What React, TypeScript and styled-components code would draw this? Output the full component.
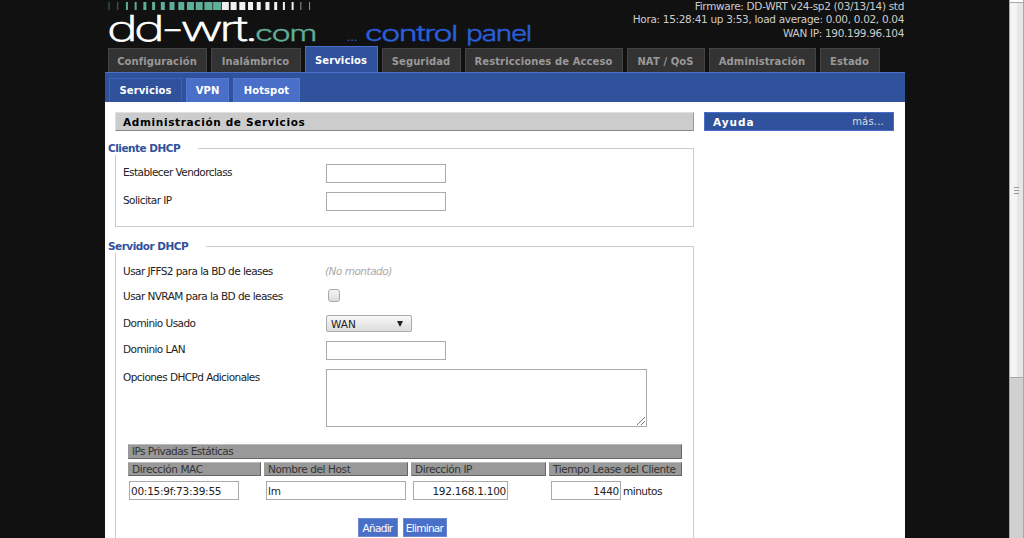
import React from "react";
import styled, { createGlobalStyle } from "styled-components";

const GlobalStyle = createGlobalStyle`
  html, body {
    margin: 0;
    padding: 0;
    height: 538px;
    overflow: hidden;
    background: #111111;
  }
  * {
    box-sizing: border-box;
  }
`;

const Screen = styled.div`
  display: flex;
  height: 538px;
  overflow: hidden;
`;

const Viewport = styled.div`
  flex: 1;
  display: flex;
  justify-content: center;
  padding-left: 1px;
`;

const Wrapper = styled.div`
  width: 800px;
  display: flex;
  flex-direction: column;
`;

const Header = styled.header`
  height: 72px;
  display: flex;
  flex-direction: column;
  justify-content: flex-end;
  position: relative;
`;

const LogoArt = styled.svg`
  position: absolute;
  left: 0;
  top: 0;
  pointer-events: none;
`;

const Status = styled.div`
  position: absolute;
  right: 1px;
  top: 0;
  text-align: right;
  font: 10.5px/13.4px "DejaVu Sans", sans-serif;
  letter-spacing: -0.32px;
  color: #cccccc;
`;

const Tabs = styled.nav`
  display: flex;
  align-items: flex-end;
  gap: 4px;
  padding-left: 3px;
`;

const Tab = styled.div<{ $active?: boolean; $width: number }>`
  width: ${({ $width }) => $width}px;
  height: ${({ $active }) => ($active ? 26 : 24)}px;
  display: flex;
  align-items: center;
  justify-content: center;
  padding: 1px 1px 0 0;
  font: bold 10px "DejaVu Sans", sans-serif;
  letter-spacing: 0.1px;
  color: ${({ $active }) => ($active ? "#ffffff" : "#999999")};
  background: ${({ $active }) => ($active ? "#30519c" : "#333333")};
  border: 1px solid ${({ $active }) => ($active ? "#4a6fc8" : "#444444")};
  border-bottom: 0;
`;

const BlueBar = styled.div`
  height: 30px;
  background: #30519c;
  border-top: 1px solid #4a6fc8;
  display: flex;
  align-items: flex-end;
  gap: 4px;
  padding-left: 4px;
`;

const SubTab = styled.div<{ $active?: boolean; $width: number }>`
  width: ${({ $width }) => $width}px;
  height: 24px;
  display: flex;
  align-items: center;
  justify-content: center;
  font: bold 10px "DejaVu Sans", sans-serif;
  letter-spacing: 0.1px;
  color: #ffffff;
  background: ${({ $active }) => ($active ? "#30519c" : "#4a6fc8")};
  border: 1px solid #5578d0;
  border-color: ${({ $active }) => ($active ? "#3f62b8" : "#5578d0")};
  border-bottom: 0;
`;

const Content = styled.main`
  flex: 1;
  background: #ffffff;
  display: flex;
  gap: 10px;
  padding: 10px 11px 0 10px;
  overflow: hidden;
`;

const MainColumn = styled.div`
  width: 579px;
  flex: none;
`;

const Sidebar = styled.aside`
  flex: 1;
`;

const PageTitle = styled.h2`
  margin: 0 0 11px;
  height: 19px;
  padding-left: 7px;
  background: #cccccc;
  border-top: 1px solid #e0e0e0;
  border-bottom: 1px solid #888888;
  border-left: 1px solid #dddddd;
  border-right: 1px solid #999999;
  font: bold 10.5px/18px "DejaVu Sans", sans-serif;
  letter-spacing: 0.65px;
  color: #000000;
`;

const HelpTitle = styled.div`
  height: 19px;
  display: flex;
  justify-content: space-between;
  padding: 0 9px 0 8px;
  background: #30519c;
  border: 1px solid #4a6fc8;
  font: 11px/18px "DejaVu Sans", sans-serif;
  color: #ffffff;
`;

const HelpHeading = styled.span`
  font-weight: bold;
  font-size: 10.5px;
  letter-spacing: 1px;
`;

const HelpMore = styled.span`
  font-size: 10px;
  letter-spacing: 0.2px;
  color: #dddddd;
`;

const Fieldset = styled.fieldset<{ $height: number }>`
  margin: 0 0 13px;
  padding: 9px 7px 0;
  min-width: 0;
  height: ${({ $height }) => $height}px;
  border: 1px solid #cccccc;
`;

const Legend = styled.legend`
  margin-left: -15px;
  padding: 0 18px 0 0;
  font: bold 10.5px/13px "DejaVu Sans", sans-serif;
  letter-spacing: -0.5px;
  color: #30519c;
`;

const Row = styled.div<{ $height: number; $top?: number }>`
  display: flex;
  align-items: flex-start;
  height: ${({ $height }) => $height}px;
  padding-top: ${({ $top }) => $top ?? 0}px;
`;

const Label = styled.label`
  width: 203px;
  flex: none;
  padding-top: 1px;
  font: 10.5px/14px "DejaVu Sans", sans-serif;
  letter-spacing: -0.56px;
  color: #222222;
`;

const Note = styled.span`
  padding-top: 1px;
  margin-left: -1px;
  font: italic 10.5px/14px "DejaVu Sans", sans-serif;
  letter-spacing: -0.5px;
  color: #aaaaaa;
`;

const TextInput = styled.input<{ $width: number; $right?: boolean }>`
  width: ${({ $width }) => $width}px;
  height: 19px;
  padding: ${({ $right }) => ($right ? "0 1px 0 0" : "0 0 0 1px")};
  background: #ffffff;
  border: 1px solid #aaaaaa;
  outline: none;
  font: 10.5px "DejaVu Sans", sans-serif;
  letter-spacing: -0.25px;
  color: #222222;
  text-align: ${({ $right }) => ($right ? "right" : "left")};
`;

const Check = styled.span`
  display: block;
  width: 12px;
  height: 13px;
  margin: 1px 0 0 2px;
  border: 1px solid #aaaaaa;
  border-radius: 3px;
  background: linear-gradient(#f4f4f4, #dcdcdc);
`;

const SelectBox = styled.div`
  width: 86px;
  height: 17px;
  display: flex;
  align-items: center;
  justify-content: space-between;
  padding: 1px 8px 0 4px;
  border: 1px solid #aaaaaa;
  border-radius: 2px;
  background: linear-gradient(#f8f8f8, #dddddd);
  font: 10.5px "DejaVu Sans", sans-serif;
  color: #222222;
`;

const Arrow = styled.span`
  width: 0;
  height: 0;
  border-left: 3px solid transparent;
  border-right: 3px solid transparent;
  border-top: 6px solid #222222;
`;

const TextArea = styled.div`
  position: relative;
  width: 321px;
  height: 58px;
  border: 1px solid #aaaaaa;
`;

const Resizer = styled.svg`
  position: absolute;
  right: 0;
  bottom: 0;
`;

const LeaseTable = styled.div`
  margin: 17px 0 0 5px;
  width: 554px;
`;

const TableCaption = styled.div`
  height: 15px;
  padding-left: 3px;
  margin-bottom: 3px;
  background: #999999;
  border: 1px solid #999999;
  border-top-color: #bbbbbb;
  border-bottom-color: #666666;
  border-right-color: #666666;
  font: 10.5px/13px "DejaVu Sans", sans-serif;
  letter-spacing: -0.56px;
  color: #333333;
`;

const TableGrid = styled.div`
  display: grid;
  grid-template-columns: 133px 144px 135px 133px;
  column-gap: 3px;
`;

const ColumnHead = styled.div`
  height: 14px;
  padding-left: 3px;
  background: #999999;
  border: 1px solid #999999;
  border-top-color: #bbbbbb;
  border-bottom-color: #666666;
  border-right-color: #666666;
  font: 10.5px/12px "DejaVu Sans", sans-serif;
  letter-spacing: -0.4px;
  color: #333333;
  white-space: nowrap;
  overflow: hidden;
`;

const Cell = styled.div<{ $pad: number }>`
  display: flex;
  align-items: center;
  padding: 5px 0 0 ${({ $pad }) => $pad}px;
  font: 10.5px "DejaVu Sans", sans-serif;
  letter-spacing: -0.5px;
  color: #222222;
`;

const Minutes = styled.span`
  margin-left: 2px;
`;

const Buttons = styled.div`
  display: flex;
  justify-content: center;
  gap: 5px;
  margin-top: 18px;
  padding-right: 5px;
`;

const ActionButton = styled.div<{ $width: number }>`
  width: ${({ $width }) => $width}px;
  height: 19px;
  display: flex;
  align-items: center;
  justify-content: center;
  background: #4a6fc8;
  border: 1px solid #6d8ad0;
  font: 10.5px "DejaVu Sans", sans-serif;
  letter-spacing: -0.7px;
  color: #ffffff;
`;

const ScrollBar = styled.div`
  width: 15px;
  flex: none;
  display: flex;
  flex-direction: column;
  background: #d0d0d0;
  border-left: 1px solid #a8a8a8;
  border-right: 1px solid #a8a8a8;
`;

const ScrollCap = styled.div`
  height: 3px;
  background: #ffffff;
  border-bottom: 1px solid #a8a8a8;
`;

const ScrollThumb = styled.div`
  height: 375px;
  display: flex;
  flex-direction: column;
  align-items: center;
  justify-content: center;
  gap: 2px;
  background: linear-gradient(90deg, #f4f4f4 0 55%, #e6e6e6 55% 100%);
  border-bottom: 1px solid #a8a8a8;
`;

const Grip = styled.span`
  width: 5px;
  height: 1px;
  background: #999999;
`;

const LOGO_BARS = [1, 1, 2, 2, 3, 3, 4, 5, 6, 7, 7, 8, 8, 7, 6, 6, 5, 4, 4, 3, 2, 2, 1, 1];

const Logo: React.FC = () => (
  <LogoArt width="440" height="56" viewBox="0 0 440 56">
    {LOGO_BARS.map((w, i) => (
      <rect
        key={i}
        x={3.5 + i * 8.72}
        y="2"
        width={w}
        height="8"
        fill={i < 13 ? "#5fae98" : "#f0f0f0"}
        opacity={w === 1 ? 0.6 : 1}
      />
    ))}
    <text
      x="2"
      y="41"
      fontFamily="Inter, sans-serif"
      fontWeight="200"
      fontSize="35"
      letterSpacing="-2.5"
      fill="#ffffff"
      stroke="#ffffff"
      strokeWidth="0.7"
      textLength="148"
      lengthAdjust="spacingAndGlyphs"
    >
      dd-wrt.
    </text>
    <text
      x="150"
      y="41"
      fontFamily="Inter, sans-serif"
      fontWeight="300"
      fontSize="21"
      letterSpacing="-1"
      fill="#5fae98"
      stroke="#5fae98"
      strokeWidth="0.3"
      textLength="61"
      lengthAdjust="spacingAndGlyphs"
    >
      com
    </text>
    <text x="242" y="41" fontFamily="Inter, sans-serif" fontSize="12" fill="#2a5fd8">
      ...
    </text>
    <text
      x="260"
      y="41"
      fontFamily="Inter, sans-serif"
      fontWeight="300"
      fontSize="21"
      letterSpacing="-1"
      fill="#2a5fd8"
      stroke="#2a5fd8"
      strokeWidth="0.4"
      textLength="92"
      lengthAdjust="spacingAndGlyphs"
    >
      control
    </text>
    <text
      x="361"
      y="41"
      fontFamily="Inter, sans-serif"
      fontWeight="300"
      fontSize="21"
      letterSpacing="-1"
      fill="#2a5fd8"
      stroke="#2a5fd8"
      strokeWidth="0.4"
      textLength="65"
      lengthAdjust="spacingAndGlyphs"
    >
      panel
    </text>
  </LogoArt>
);

const TABS = [
  { label: "Configuración", width: 99 },
  { label: "Inalámbrico", width: 90 },
  { label: "Servicios", width: 73, active: true },
  { label: "Seguridad", width: 79 },
  { label: "Restricciones de Acceso", width: 158 },
  { label: "NAT / QoS", width: 78 },
  { label: "Administración", width: 107 },
  { label: "Estado", width: 60 },
];

const SUB_TABS = [
  { label: "Servicios", width: 73, active: true },
  { label: "VPN", width: 43 },
  { label: "Hotspot", width: 67 },
];

const App: React.FC = () => {
  return (
    <Screen>
      <GlobalStyle />
      <Viewport>
        <Wrapper>
          <Header>
            <Logo />
            <Status>
              <div>Firmware: DD-WRT v24-sp2 (03/13/14) std</div>
              <div>Hora: 15:28:41 up 3:53, load average: 0.00, 0.02, 0.04</div>
              <div>WAN IP: 190.199.96.104</div>
            </Status>
            <Tabs>
              {TABS.map((tab) => (
                <Tab key={tab.label} $active={tab.active} $width={tab.width}>
                  {tab.label}
                </Tab>
              ))}
            </Tabs>
          </Header>
          <BlueBar>
            {SUB_TABS.map((tab) => (
              <SubTab key={tab.label} $active={tab.active} $width={tab.width}>
                {tab.label}
              </SubTab>
            ))}
          </BlueBar>
          <Content>
            <MainColumn>
              <PageTitle>Administración de Servicios</PageTitle>
              <Fieldset $height={85}>
                <Legend>Cliente DHCP</Legend>
                <Row $height={28}>
                  <Label>Establecer Vendorclass</Label>
                  <TextInput $width={120} />
                </Row>
                <Row $height={28}>
                  <Label>Solicitar IP</Label>
                  <TextInput $width={120} />
                </Row>
              </Fieldset>
              <Fieldset $height={320}>
                <Legend>Servidor DHCP</Legend>
                <Row $height={26} $top={1}>
                  <Label>Usar JFFS2 para la BD de leases</Label>
                  <Note>(No montado)</Note>
                </Row>
                <Row $height={27}>
                  <Label>Usar NVRAM para la BD de leases</Label>
                  <Check />
                </Row>
                <Row $height={26}>
                  <Label>Dominio Usado</Label>
                  <SelectBox>
                    WAN
                    <Arrow />
                  </SelectBox>
                </Row>
                <Row $height={28}>
                  <Label>Dominio LAN</Label>
                  <TextInput $width={120} />
                </Row>
                <Row $height={58}>
                  <Label>Opciones DHCPd Adicionales</Label>
                  <TextArea>
                    <Resizer width="11" height="11" viewBox="0 0 11 11">
                      <path d="M10 2 L2 10 M10 6 L6 10" stroke="#777777" strokeWidth="1" />
                    </Resizer>
                  </TextArea>
                </Row>
                <LeaseTable>
                  <TableCaption>IPs Privadas Estáticas</TableCaption>
                  <TableGrid>
                    <ColumnHead>Dirección MAC</ColumnHead>
                    <ColumnHead>Nombre del Host</ColumnHead>
                    <ColumnHead>Dirección IP</ColumnHead>
                    <ColumnHead>Tiempo Lease del Cliente</ColumnHead>
                    <Cell $pad={1}>
                      <TextInput $width={110} defaultValue="00:15:9f:73:39:55" />
                    </Cell>
                    <Cell $pad={2}>
                      <TextInput $width={140} defaultValue="lm" />
                    </Cell>
                    <Cell $pad={2}>
                      <TextInput $width={95} $right defaultValue="192.168.1.100" />
                    </Cell>
                    <Cell $pad={2}>
                      <TextInput $width={70} $right defaultValue="1440" />
                      <Minutes>minutos</Minutes>
                    </Cell>
                  </TableGrid>
                </LeaseTable>
                <Buttons>
                  <ActionButton $width={40}>Añadir</ActionButton>
                  <ActionButton $width={44}>Eliminar</ActionButton>
                </Buttons>
              </Fieldset>
            </MainColumn>
            <Sidebar>
              <HelpTitle>
                <HelpHeading>Ayuda</HelpHeading>
                <HelpMore>más...</HelpMore>
              </HelpTitle>
            </Sidebar>
          </Content>
        </Wrapper>
      </Viewport>
      <ScrollBar>
        <ScrollCap />
        <ScrollThumb>
          <Grip />
          <Grip />
          <Grip />
        </ScrollThumb>
      </ScrollBar>
    </Screen>
  );
};

export default App;
